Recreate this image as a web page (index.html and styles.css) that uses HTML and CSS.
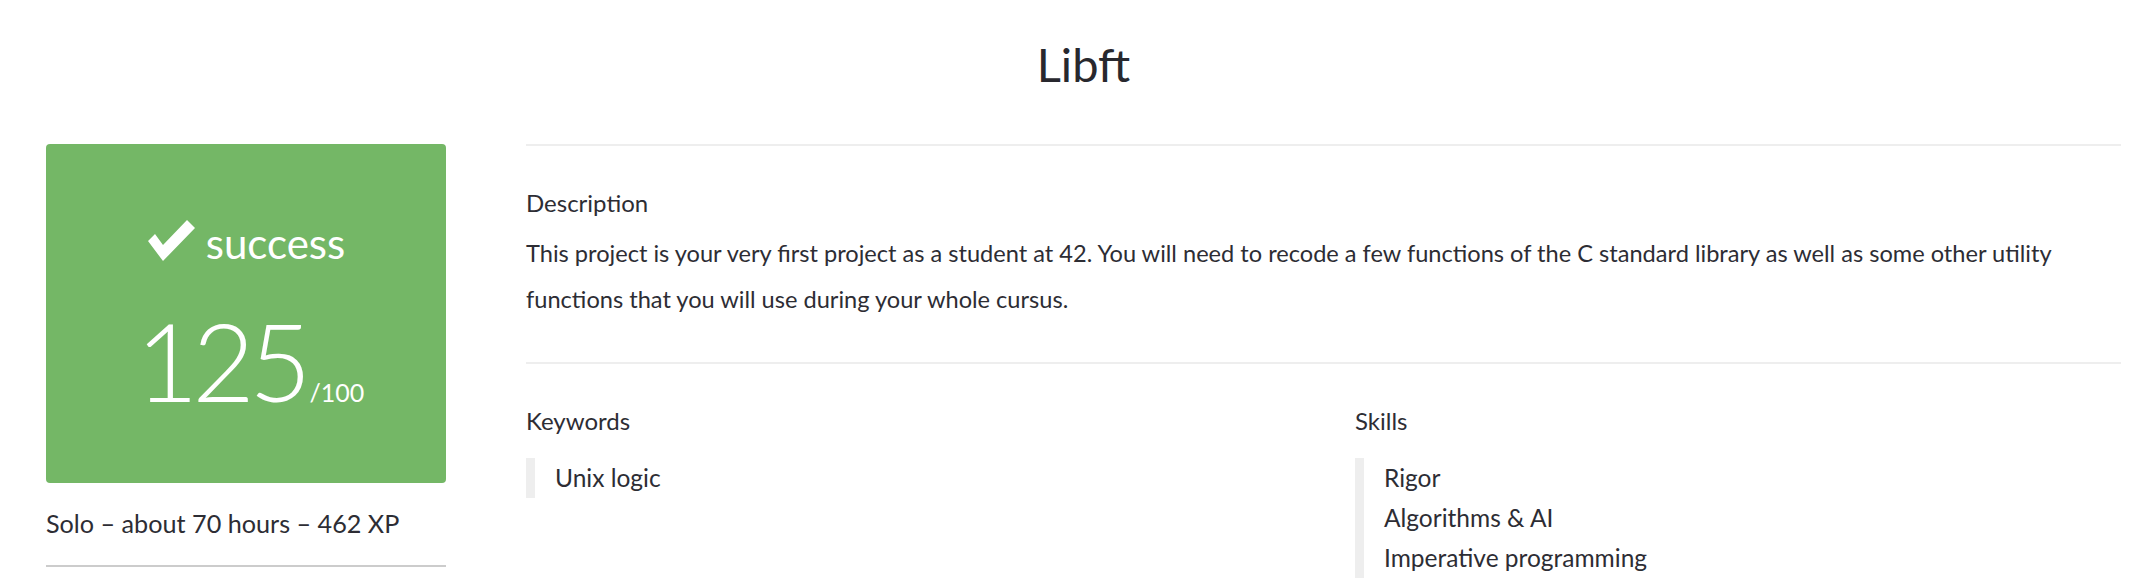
FILE: index.html
```html
<!DOCTYPE html>
<html lang="en">
<head>
<meta charset="utf-8">
<title>Libft</title>
<link rel="stylesheet" href="styles.css">
</head>
<body>
<div class="page">
  <h1 class="title">Libft</h1>
  <div class="layout">
    <aside class="side">
      <div class="result">
        <div class="status">
          <svg class="check" width="49" height="43" viewBox="0 0 49 43"><polygon points="1,22 8,15 16,26 40,1 48,9 16,42" fill="#fff"/></svg>
          <span>success</span>
        </div>
        <div class="score"><span class="num">125</span><span class="max">/100</span></div>
      </div>
      <p class="meta">Solo – about 70 hours – 462 XP</p>
    </aside>
    <main class="main">
      <section class="block">
        <h2 class="label">Description</h2>
        <p class="desc">This project is your very first project as a student at 42. You will need to recode a few functions of the C standard library as well as some other utility functions that you will use during your whole cursus.</p>
      </section>
      <section class="block cols">
        <div class="col">
          <h2 class="label">Keywords</h2>
          <ul class="tags">
            <li>Unix logic</li>
          </ul>
        </div>
        <div class="col">
          <h2 class="label">Skills</h2>
          <ul class="tags">
            <li>Rigor</li>
            <li>Algorithms &amp; AI</li>
            <li>Imperative programming</li>
          </ul>
        </div>
      </section>
    </main>
  </div>
</div>
</body>
</html>
```
FILE: styles.css
```css
* { box-sizing: border-box; }
html, body { margin: 0; padding: 0; background: #fff; }
body {
  font-family: Lato, "Noto Sans", sans-serif;
  color: #2d2d34;
}
.page {
  padding: 37px 11px 0 46px;
}
.title {
  margin: 0 0 52px;
  font-size: 47px;
  line-height: 55px;
  font-weight: 400;
  text-align: center;
  color: #28282e;
}
.layout {
  display: flex;
  gap: 80px;
  align-items: flex-start;
}
.side {
  flex: 0 0 400px;
}
.result {
  height: 339px;
  background: #74b766;
  border-radius: 4px;
  color: #fff;
  padding-top: 74px;
  display: flex;
  flex-direction: column;
  align-items: center;
}
.status {
  display: flex;
  align-items: flex-end;
  height: 50px;
  font-size: 42px;
  line-height: 50px;
}
.check {
  display: block;
  margin: 0 10px 3px 0;
  transform: translateY(-3px);
}
.score {
  margin-top: 37px;
  line-height: 110px;
  white-space: nowrap;
  padding-left: 8px;
}
.num {
  font-size: 108px;
  font-weight: 300;
  letter-spacing: -6px;
}
.max {
  font-size: 25px;
  margin-left: 4px;
}
.meta {
  margin: 22px 0 0;
  font-size: 25.2px;
  line-height: 36px;
  padding-bottom: 24px;
  border-bottom: 2px solid #cccccc;
}
.main {
  flex: 1;
  min-width: 0;
}
.block {
  border-top: 2px solid #eeeeee;
  padding-top: 42px;
}
.block:first-child {
  padding-bottom: 40px;
}
.label {
  margin: 0;
  font-size: 24px;
  line-height: 30px;
  font-weight: 400;
}
.desc {
  margin: 12px 0 0;
  font-size: 23.6px;
  line-height: 46px;
}
.cols {
  display: grid;
  grid-template-columns: 1fr 1fr;
  column-gap: 63px;
}
.tags {
  list-style: none;
  margin: 22px 0 0;
  padding: 0 0 0 20px;
  border-left: 9px solid #eeeeee;
}
.tags li {
  font-size: 24.5px;
  line-height: 40px;
}
```
